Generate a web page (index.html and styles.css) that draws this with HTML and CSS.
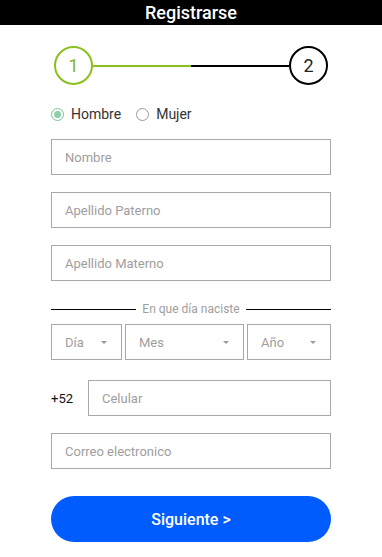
FILE: index.html
```html
<!DOCTYPE html>
<html lang="es">
<head>
    <meta charset="UTF-8">
    <meta name="viewport" content="width=device-width, initial-scale=1.0">
    <title>Registrarse</title>
    <link rel="stylesheet" href="styles.css">
</head>
<body>
    <header class="topbar">Registrarse</header>

    <div class="form">
        <div class="steps">
            <div class="step active">1</div>
            <div class="bar done"></div>
            <div class="bar"></div>
            <div class="step">2</div>
        </div>

        <div class="gender">
            <label class="radio"><span class="dot checked"></span>Hombre</label>
            <label class="radio"><span class="dot"></span>Mujer</label>
        </div>

        <input class="field" type="text" placeholder="Nombre">
        <input class="field" type="text" placeholder="Apellido Paterno">
        <input class="field" type="text" placeholder="Apellido Materno">

        <div class="divider"><span>En que día naciste</span></div>

        <div class="birth">
            <div class="select day">Día<span class="caret"></span></div>
            <div class="select month">Mes<span class="caret"></span></div>
            <div class="select year">Año<span class="caret"></span></div>
        </div>

        <div class="phone">
            <span class="prefix">+52</span>
            <input class="field" type="text" placeholder="Celular">
        </div>

        <input class="field" type="text" placeholder="Correo electronico">

        <button class="next">Siguiente &gt;</button>
    </div>
</body>
</html>
```

FILE: styles.css
```css
* {
    margin: 0;
    padding: 0;
    box-sizing: border-box;
}

body {
    background-color: #fff;
    font-family: Roboto, 'Liberation Sans', sans-serif;
    color: #222;
}

.topbar {
    height: 25px;
    line-height: 25px;
    background-color: #000;
    color: #fff;
    text-align: center;
    font-size: 18px;
    font-weight: 500;
}

.form {
    margin: 0 51px;
    display: flex;
    flex-direction: column;
}

.steps {
    display: flex;
    align-items: center;
    margin-top: 21px;
    padding: 0 3px;
}

.step {
    width: 39px;
    height: 39px;
    border: 2px solid #000;
    border-radius: 50%;
    display: flex;
    align-items: center;
    justify-content: center;
    font-size: 18px;
    color: #222;
    flex-shrink: 0;
}

.step.active {
    border-color: #8bc11c;
    color: #7fb51a;
}

.bar {
    flex: 1;
    height: 2px;
    background-color: #000;
}

.bar.done {
    background-color: #8bc11c;
}

.gender {
    display: flex;
    align-items: center;
    gap: 15px;
    height: 20px;
    margin-top: 19px;
    font-size: 14px;
    color: #333;
}

.radio {
    display: flex;
    align-items: center;
    gap: 7px;
    cursor: pointer;
}

.dot {
    width: 13px;
    height: 13px;
    border: 1px solid #999;
    border-radius: 50%;
    position: relative;
}

.dot.checked {
    border-color: #7cc19a;
}

.dot.checked::after {
    content: '';
    position: absolute;
    top: 2px;
    left: 2px;
    width: 7px;
    height: 7px;
    border-radius: 50%;
    background-color: #8dd0aa;
}

.field {
    width: 100%;
    height: 36px;
    border: 1px solid #a8a8a8;
    padding: 0 13px;
    font-family: inherit;
    font-size: 13px;
    color: #333;
    outline: none;
    margin-top: 17px;
}

.gender + .field {
    margin-top: 15px;
}

.field::placeholder {
    color: #9e9e9e;
}

.divider {
    display: flex;
    align-items: center;
    gap: 6px;
    margin-top: 21px;
    font-size: 12px;
    color: #9e9e9e;
}

.divider::before,
.divider::after {
    content: '';
    flex: 1;
    height: 1px;
    background-color: #000;
}

.birth {
    display: flex;
    gap: 3px;
    margin-top: 8px;
}

.select {
    height: 36px;
    border: 1px solid #a8a8a8;
    display: flex;
    align-items: center;
    justify-content: space-between;
    padding: 0 14px 0 13px;
    font-size: 13px;
    color: #9e9e9e;
}

.day {
    width: 71px;
}

.month {
    flex: 1;
}

.year {
    width: 84px;
}

.caret {
    width: 0;
    height: 0;
    border-left: 3px solid transparent;
    border-right: 3px solid transparent;
    border-top: 3px solid #999;
}

.phone {
    display: flex;
    align-items: center;
    margin-top: 20px;
}

.phone .field {
    margin-top: 0;
    flex: 1;
}

.prefix {
    width: 37px;
    font-size: 13px;
    color: #111;
}

.next {
    height: 46px;
    margin-top: 27px;
    border: none;
    border-radius: 23px;
    background-color: #005cff;
    color: #fff;
    font-family: inherit;
    font-size: 16px;
    font-weight: 500;
    cursor: pointer;
}
```
